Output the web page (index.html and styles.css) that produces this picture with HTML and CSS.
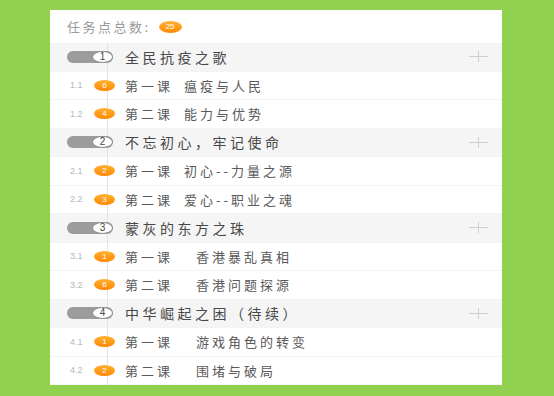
FILE: index.html
```html
<!DOCTYPE html>
<html lang="zh-CN">
<head>
  <meta charset="UTF-8">
  <title>任务点</title>
  <link rel="stylesheet" href="styles.css">
</head>
<body>

  <div class="panel">
    <!-- Summary -->
    <div class="summary">
      <span class="summary-label">任务点总数:</span>
      <span class="badge">25</span>
    </div>

    <!-- Chapter tree -->
    <div class="tree">

      <div class="row chapter">
        <div class="toggle"><b>1</b></div>
        <span class="chapter-title">全民抗疫之歌</span>
        <svg class="plus" width="19" height="11" viewBox="0 0 19 11"><path d="M0 5.5H19M9.5 0V11" stroke="#cfcfcf" stroke-width="1"/></svg>
      </div>
      <div class="row lesson">
        <span class="num">1.1</span>
        <span class="badge">6</span>
        <span class="lesson-text"><span class="lesson-no">第一课</span>瘟疫与人民</span>
      </div>
      <div class="row lesson">
        <span class="num">1.2</span>
        <span class="badge">4</span>
        <span class="lesson-text"><span class="lesson-no">第二课</span>能力与优势</span>
      </div>

      <div class="row chapter">
        <div class="toggle"><b>2</b></div>
        <span class="chapter-title">不忘初心，牢记使命</span>
        <svg class="plus" width="19" height="11" viewBox="0 0 19 11"><path d="M0 5.5H19M9.5 0V11" stroke="#cfcfcf" stroke-width="1"/></svg>
      </div>
      <div class="row lesson">
        <span class="num">2.1</span>
        <span class="badge">2</span>
        <span class="lesson-text"><span class="lesson-no">第一课</span>初心--力量之源</span>
      </div>
      <div class="row lesson">
        <span class="num">2.2</span>
        <span class="badge">3</span>
        <span class="lesson-text"><span class="lesson-no">第二课</span>爱心--职业之魂</span>
      </div>

      <div class="row chapter">
        <div class="toggle"><b>3</b></div>
        <span class="chapter-title">蒙灰的东方之珠</span>
        <svg class="plus" width="19" height="11" viewBox="0 0 19 11"><path d="M0 5.5H19M9.5 0V11" stroke="#cfcfcf" stroke-width="1"/></svg>
      </div>
      <div class="row lesson">
        <span class="num">3.1</span>
        <span class="badge">1</span>
        <span class="lesson-text"><span class="lesson-no wide">第一课</span>香港暴乱真相</span>
      </div>
      <div class="row lesson">
        <span class="num">3.2</span>
        <span class="badge">6</span>
        <span class="lesson-text"><span class="lesson-no wide">第二课</span>香港问题探源</span>
      </div>

      <div class="row chapter">
        <div class="toggle"><b>4</b></div>
        <span class="chapter-title">中华崛起之困（待续）</span>
        <svg class="plus" width="19" height="11" viewBox="0 0 19 11"><path d="M0 5.5H19M9.5 0V11" stroke="#cfcfcf" stroke-width="1"/></svg>
      </div>
      <div class="row lesson">
        <span class="num">4.1</span>
        <span class="badge">1</span>
        <span class="lesson-text"><span class="lesson-no wide">第一课</span>游戏角色的转变</span>
      </div>
      <div class="row lesson">
        <span class="num">4.2</span>
        <span class="badge">2</span>
        <span class="lesson-text"><span class="lesson-no wide">第二课</span>围堵与破局</span>
      </div>

    </div>
  </div>

</body>
</html>
```

FILE: styles.css
```css
body {
  margin: 0;
  background-color: #92d050;
  font-family: "Noto Sans CJK SC", "Noto Sans", sans-serif;
}

.panel {
  width: 452px;
  height: 375px;
  margin: 10px 0 0 50px;
  background-color: #fff;
  overflow: hidden;
}

/* Summary line */
.summary {
  height: 33px;
  display: flex;
  align-items: center;
  padding-left: 17px;
}

.summary-label {
  font-size: 13px;
  letter-spacing: 2.5px;
  color: #9a9a9a;
  margin-right: 8px;
}

.badge {
  position: relative;
  z-index: 1;
  flex: none;
  width: 21px;
  height: 11px;
  border-radius: 50%;
  background: linear-gradient(#ffb233, #ff8800);
  color: #fff;
  font-family: "Liberation Sans", Arial, sans-serif;
  font-size: 8px;
  line-height: 11px;
  text-align: center;
}

.summary .badge {
  width: 23px;
  height: 12px;
  line-height: 12px;
}

/* Tree */
.tree {
  position: relative;
}

.tree::before {
  content: "";
  position: absolute;
  left: 57px;
  top: 0;
  bottom: 0;
  width: 1px;
  background-color: #e4e4e4;
}

.row {
  height: 28.5px;
  display: flex;
  align-items: center;
  box-sizing: border-box;
  border-bottom: 1px solid #f4f4f4;
}

.chapter {
  background-color: #f5f5f5;
  padding: 0 14px 0 17px;
}

.toggle {
  position: relative;
  z-index: 1;
  flex: none;
  display: flex;
  justify-content: flex-end;
  width: 46px;
  height: 12px;
  border-radius: 6px;
  background-color: #9c9c9c;
}

.toggle b {
  width: 21px;
  height: 12px;
  box-sizing: border-box;
  border: 1px solid #8c8c8c;
  border-radius: 50%;
  background-color: #fff;
  color: #444;
  font-family: "Liberation Sans", Arial, sans-serif;
  font-size: 10px;
  font-weight: normal;
  line-height: 10px;
  text-align: center;
}

.chapter-title {
  margin-left: 12px;
  font-size: 14px;
  letter-spacing: 3.5px;
  color: #484848;
}

.plus {
  margin-left: auto;
}

.lesson {
  padding-left: 20px;
}

.num {
  width: 24px;
  font-family: "Liberation Sans", Arial, sans-serif;
  font-size: 9px;
  color: #b8b8b8;
}

.lesson-text {
  margin-left: 10px;
  font-size: 13px;
  letter-spacing: 3px;
  color: #5a5a5a;
}

.lesson-no {
  margin-right: 11px;
}

.lesson-no.wide {
  margin-right: 23px;
}
```
